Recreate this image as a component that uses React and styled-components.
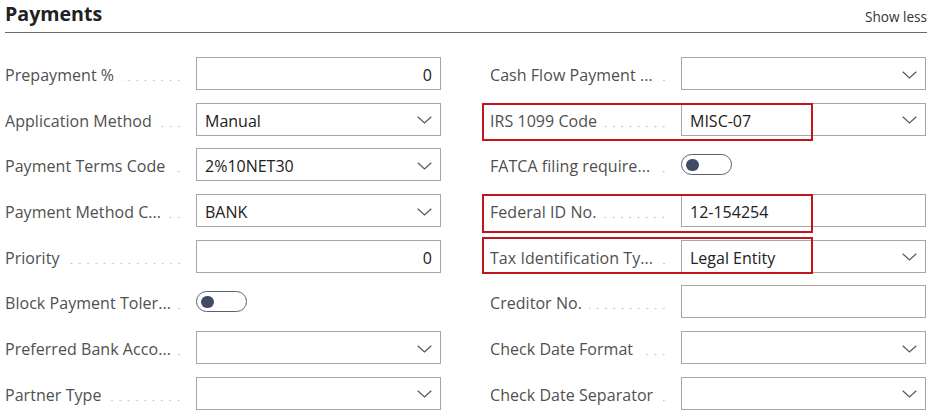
import React from "react";
import styled, { createGlobalStyle } from "styled-components";

const Global = createGlobalStyle`
  html, body { margin: 0; padding: 0; background: #ffffff; }
  body { font-family: "Open Sans", "Noto Sans", "Liberation Sans", sans-serif; }
`;

const Page = styled.div`
  width: 935px;
  height: 419px;
  box-sizing: border-box;
  padding: 0 8px 0 5px;
  overflow: hidden;
  background: #fff;
`;

const Header = styled.div`
  display: flex;
  justify-content: space-between;
  align-items: flex-end;
  height: 33px;
  box-sizing: border-box;
  border-bottom: 1px solid #6b6b6b;
  padding-bottom: 6px;
`;

const Title = styled.h2`
  margin: 0;
  font-size: 19.6px;
  font-weight: 700;
  color: #212121;
  line-height: 24px;
`;

const ShowLess = styled.span`
  font-size: 13.6px;
  color: #333;
  line-height: 16px;
  margin-bottom: 1px;
`;

const Form = styled.div`
  display: grid;
  grid-template-columns: 436px 436px;
  column-gap: 49px;
  margin-top: 24px;
`;

const Column = styled.div`
  display: flex;
  flex-direction: column;
  gap: 12.7px;
`;

const Row = styled.div`
  position: relative;
  display: grid;
  grid-template-columns: 191px 245px;
  height: 33px;
  align-items: center;
`;

const LabelCell = styled.div`
  display: flex;
  align-items: center;
  min-width: 0;
  height: 33px;
  box-sizing: border-box;
  padding: 3px 13px 0 0;
`;

const LabelText = styled.span`
  font-size: 16px;
  color: #505050;
  white-space: nowrap;
  overflow: hidden;
  letter-spacing: 0.05px;
`;

const Leader = styled.span`
  flex: 1;
  min-width: 4px;
  height: 14px;
  margin-left: 7px;
  align-self: flex-end;
  margin-bottom: 8px;
  background-image: radial-gradient(circle, #c8c8c8 0.7px, transparent 1.1px);
  background-size: 8.3px 3px;
  background-repeat: repeat-x;
  background-position: right bottom;
`;

const Box = styled.div`
  position: relative;
  height: 33px;
  box-sizing: border-box;
  border: 1px solid #a6a6a6;
  display: flex;
  align-items: center;
  justify-content: ${(p) => (p.$numeric ? "flex-end" : "flex-start")};
  padding: 3px 8px 0 8px;
  padding-right: ${(p) => (p.$select ? "30px" : "8px")};
  font-size: 16px;
  color: #212121;
`;

const Chevron = styled.svg`
  position: absolute;
  right: 8px;
  top: 12.5px;
  width: 15px;
  height: 8px;
`;

const Toggle = styled.div`
  width: 51px;
  height: 21px;
  box-sizing: border-box;
  border: 1.5px solid #5a6070;
  border-radius: 11px;
  display: flex;
  align-items: center;
  padding-left: 4px;
`;

const Knob = styled.span`
  width: 12.5px;
  height: 12.5px;
  border-radius: 50%;
  background: #414b66;
`;

const Highlight = styled.div`
  position: absolute;
  left: -8px;
  width: 331px;
  top: ${(p) => p.$top}px;
  height: ${(p) => p.$h}px;
  box-sizing: border-box;
  border: 2px solid #c0161c;
  pointer-events: none;
`;

const ChevronIcon = () => (
  <Chevron viewBox="0 0 15 8">
    <path d="M0.7 0.7 L7.5 7 L14.3 0.7" fill="none" stroke="#595959" strokeWidth="1.2" />
  </Chevron>
);

const Field = ({ label, type, value, hl }) => (
  <Row>
    <LabelCell>
      <LabelText>{label}</LabelText>
      <Leader />
    </LabelCell>
    {type === "toggle" ? (
      <Toggle>
        <Knob />
      </Toggle>
    ) : (
      <Box $numeric={type === "number"} $select={type === "select"}>
        {value && <span>{value}</span>}
        {type === "select" && <ChevronIcon />}
      </Box>
    )}
    {hl && <Highlight $top={hl[0]} $h={hl[1]} />}
  </Row>
);

const left = [
  { label: "Prepayment %", type: "number", value: "0" },
  { label: "Application Method", type: "select", value: "Manual" },
  { label: "Payment Terms Code", type: "select", value: "2%10NET30" },
  { label: "Payment Method C...", type: "select", value: "BANK" },
  { label: "Priority", type: "number", value: "0" },
  { label: "Block Payment Toler...", type: "toggle" },
  { label: "Preferred Bank Acco...", type: "select" },
  { label: "Partner Type", type: "select" },
];

const right = [
  { label: "Cash Flow Payment ...", type: "select" },
  { label: "IRS 1099 Code", type: "select", value: "MISC-07", hl: [0.5, 37.5] },
  { label: "FATCA filing require...", type: "toggle" },
  { label: "Federal ID No.", type: "text", value: "12-154254", hl: [-0.5, 39] },
  { label: "Tax Identification Ty...", type: "select", value: "Legal Entity", hl: [-3, 37.5] },
  { label: "Creditor No.", type: "text" },
  { label: "Check Date Format", type: "select" },
  { label: "Check Date Separator", type: "select" },
];

export default function App() {
  return (
    <Page>
      <Global />
      <Header>
        <Title>Payments</Title>
        <ShowLess>Show less</ShowLess>
      </Header>
      <Form>
        <Column>
          {left.map((f) => (
            <Field key={f.label} {...f} />
          ))}
        </Column>
        <Column>
          {right.map((f) => (
            <Field key={f.label} {...f} />
          ))}
        </Column>
      </Form>
    </Page>
  );
}
